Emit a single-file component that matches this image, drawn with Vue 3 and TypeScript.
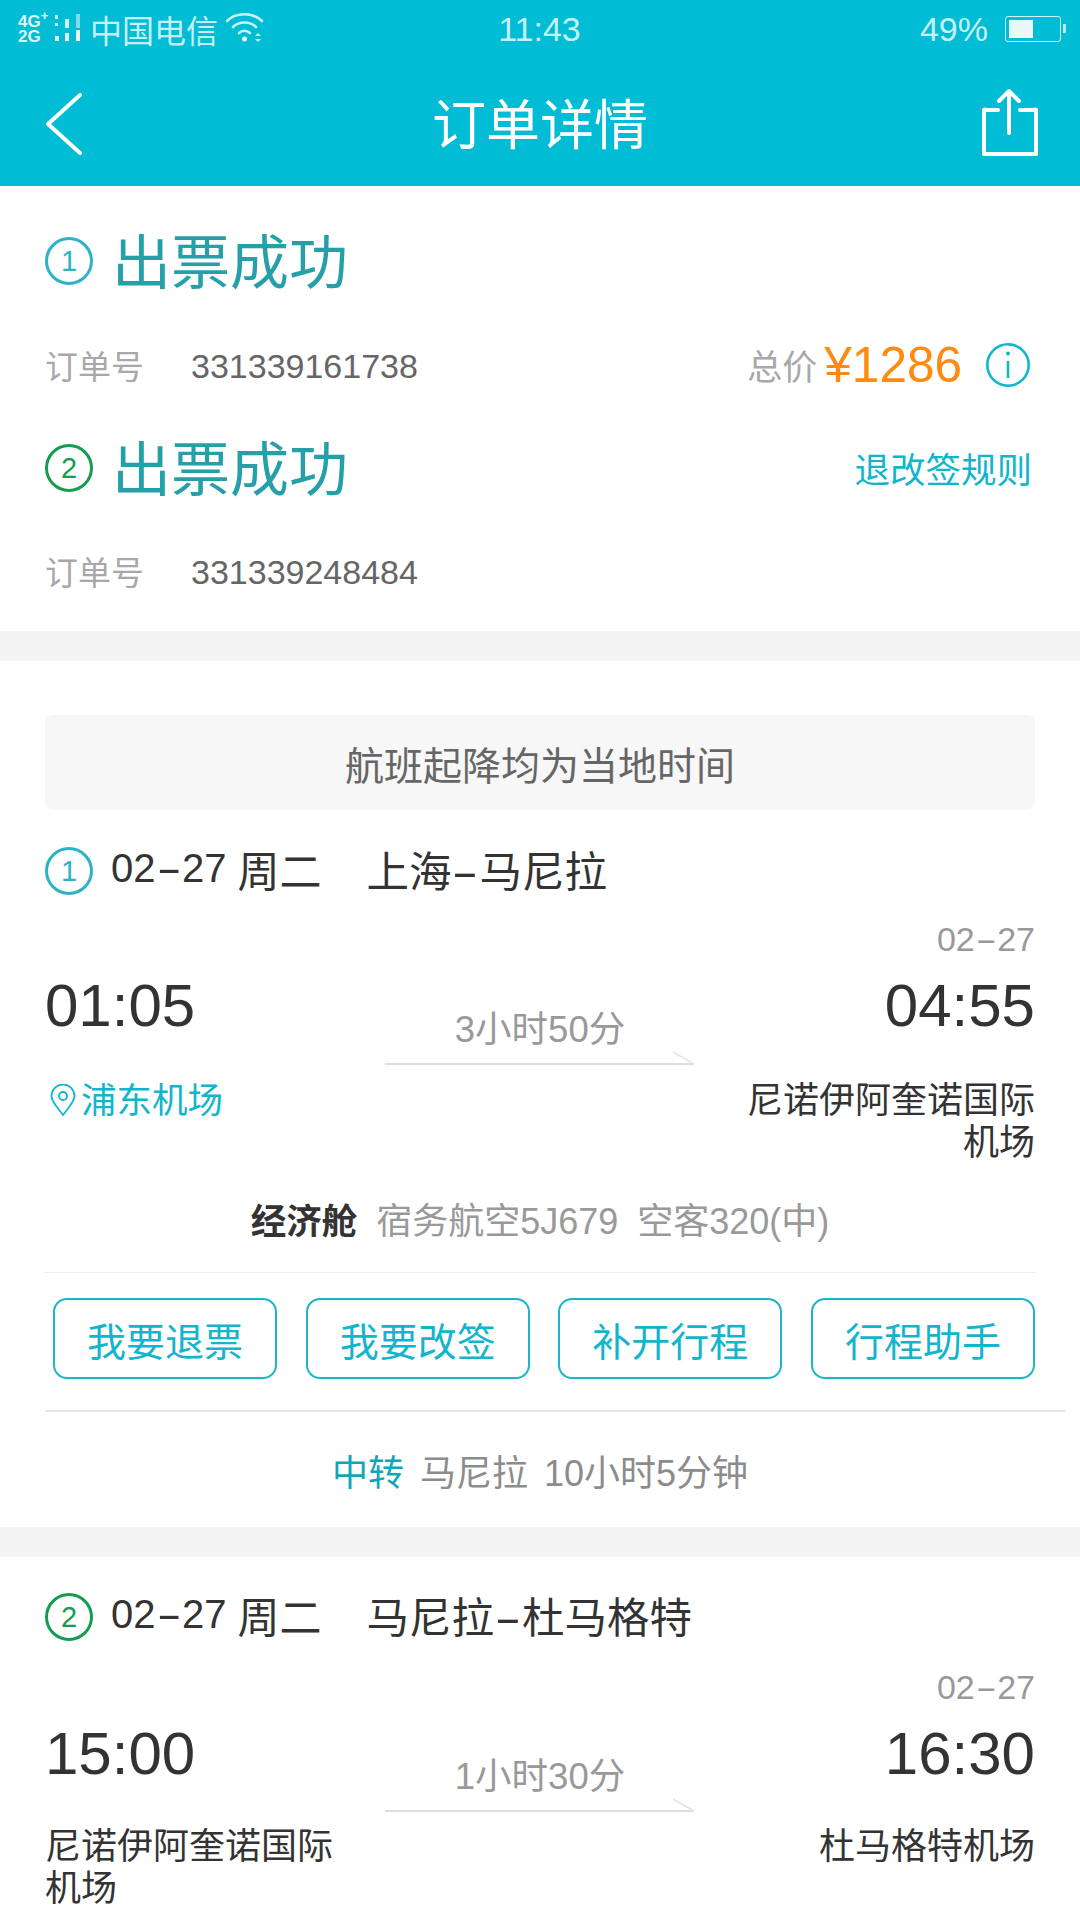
<template>
  <div class="page">
    <header class="top">
      <div class="status">
        <div class="status-left">
          <div class="net">
            <span>4G<sup>+</sup></span>
            <span>2G</span>
          </div>
          <svg class="signal" width="30" height="30" viewBox="0 0 30 30">
            <rect x="0" y="1" width="3" height="4" fill="#c9f3f7" />
            <rect x="0" y="9" width="3" height="3" fill="#c9f3f7" />
            <rect x="0" y="22" width="4" height="5" fill="#e6fafc" />
            <rect x="10" y="5" width="4" height="9" fill="#c9f3f7" />
            <rect x="10" y="19" width="4" height="8" fill="#e6fafc" />
            <rect x="21" y="0" width="4" height="14" fill="#7fdbe7" />
            <rect x="21" y="16" width="4" height="11" fill="#e6fafc" />
          </svg>
          <span class="carrier">中国电信</span>
          <svg class="wifi" width="38" height="30" viewBox="0 0 38 30" fill="none" stroke="#c9f3f7" stroke-width="2.6" stroke-linecap="round">
            <path d="M1 8C10-1 27-1 36 8" />
            <path d="M7 14C13 8 24 8 30 14" />
            <path d="M13 20C16 17 21 17 24 20" />
            <circle cx="18.500" cy="26" r="2.500" fill="#e6fafc" stroke="none" />
            <path d="M29 23l3-3 3 3zM29 26l3 3 3-3z" fill="#c9f3f7" stroke="none" />
          </svg>
        </div>
        <span class="clock">11:43</span>
        <div class="status-right">
          <span>49%</span>
          <div class="battery"><i class="battery-level" :style="{ width: '49%' }"></i></div>
        </div>
      </div>
      <nav class="nav">
        <svg width="36" height="62" viewBox="0 0 36 62" fill="none" stroke="#fff" stroke-width="4" stroke-linecap="round" stroke-linejoin="round">
          <path d="M34 2L2 31l32 29" />
        </svg>
        <h1>订单详情</h1>
        <svg class="share" width="56" height="68" viewBox="0 0 56 68" fill="none" stroke="#fff" stroke-width="4" stroke-linecap="round" stroke-linejoin="round">
          <path d="M16 22H4a1 1 0 0 0-2 2v41a1 1 0 0 0 2 1h48a1 1 0 0 0 2-2V24a1 1 0 0 0-2-2H38" />
          <path d="M27 45V3M17 13L27 3l10 10" />
        </svg>
      </nav>
    </header>

    <section class="summary">
      <div class="ticket">
        <span class="badge">1</span>
        <span class="ticket-state">出票成功</span>
      </div>
      <div class="order">
        <span class="order-label">订单号</span>
        <span class="order-no">331339161738</span>
        <div class="price">
          <span class="price-label">总价</span>
          <span class="price-value">¥1286</span>
          <svg width="46" height="46" viewBox="0 0 46 46" fill="none" stroke="#12b5cc" stroke-width="2.600">
            <circle cx="23" cy="23" r="20.700" />
            <path d="M23 19v17" />
            <circle cx="23" cy="11.500" r="2" fill="#12b5cc" stroke="none" />
          </svg>
        </div>
      </div>
      <div class="ticket ticket-second">
        <span class="badge badge-green">2</span>
        <span class="ticket-state">出票成功</span>
        <span class="rules">退改签规则</span>
      </div>
      <div class="order order-second">
        <span class="order-label">订单号</span>
        <span class="order-no">331339248484</span>
      </div>
    </section>

    <section v-for="(flight, i) in flights" :key="i" class="flight" :class="i === 0 ? 'flight-first' : 'flight-next'">
      <div v-if="i === 0" class="notice">航班起降均为当地时间</div>
      <div class="route">
        <span class="badge" :class="{ 'badge-green': i === 1 }">{{ i + 1 }}</span>
        <span class="route-date">02<span class="dash">-</span>27</span>
        <span class="route-day">周二</span>
        <span class="route-name">{{ flight.cityFrom }}<span class="dash">-</span>{{ flight.cityTo }}</span>
      </div>
      <div class="times">
        <span class="arrive-date">02<span class="dash">-</span>27</span>
        <span class="time time-from">{{ flight.from }}</span>
        <div class="duration">
          <span>{{ flight.duration }}</span>
          <svg width="310" height="14" viewBox="0 0 310 14" fill="none">
            <path d="M0 13h309" stroke="#dedede" stroke-width="2" />
            <path d="M288 1l21 12" stroke="#e4e4e4" stroke-width="1.500" />
          </svg>
        </div>
        <span class="time time-to">{{ flight.to }}</span>
        <div class="airport airport-from" :class="{ 'airport-link': flight.link }">
          <svg v-if="flight.link" width="26" height="32" viewBox="0 0 26 32" fill="none" stroke="#12b5cc" stroke-width="1.800">
            <path d="M13 31C8 24 1.500 18 1.500 12a11.500 11.500 0 0 1 23 0C24.500 18 18 24 13 31z" />
            <circle cx="13" cy="12" r="4" />
          </svg>
          <span>{{ flight.fromAirport }}</span>
        </div>
        <div class="airport airport-to">{{ flight.toAirport }}</div>
      </div>
      <template v-if="i === 0">
        <div class="cabin">
          <b>经济舱</b>
          <span>宿务航空5J679</span>
          <span>空客320(中)</span>
        </div>
        <div class="actions">
          <button v-for="action in actions" :key="action" type="button">{{ action }}</button>
        </div>
        <div class="transfer">
          <b>中转</b>
          <span>马尼拉</span>
          <span>10小时5分钟</span>
        </div>
      </template>
    </section>
  </div>
</template>

<script setup lang="ts">
const actions = ["我要退票", "我要改签", "补开行程", "行程助手"];

const flights = [
  {
    cityFrom: "上海",
    cityTo: "马尼拉",
    from: "01:05",
    to: "04:55",
    duration: "3小时50分",
    fromAirport: "浦东机场",
    toAirport: "尼诺伊阿奎诺国际机场",
    link: true,
  },
  {
    cityFrom: "马尼拉",
    cityTo: "杜马格特",
    from: "15:00",
    to: "16:30",
    duration: "1小时30分",
    fromAirport: "尼诺伊阿奎诺国际机场",
    toAirport: "杜马格特机场",
    link: false,
  },
];
</script>

<style>
html,
body {
  background: #fff;
}
</style>

<style scoped>
.page {
  width: 1080px;
  height: 1920px;
  overflow: hidden;
  background: #f4f4f4;
  font-family: "Liberation Sans", "Noto Sans CJK SC", sans-serif;
  color: #333;
}

.top {
  height: 186px;
  background: #00bcd4;
  color: #fff;
}

.status {
  height: 58px;
  padding: 0 19px 0 18px;
  display: grid;
  grid-template-columns: 1fr auto 1fr;
  align-items: center;
  font-size: 34px;
  color: #c4f1f6;
}

.status-left {
  display: flex;
  align-items: center;
  font-size: 32px;
}

.net {
  width: 37px;
  display: flex;
  flex-direction: column;
  font-size: 17px;
  line-height: 15px;
  font-weight: 700;
  color: #dff7fa;
  white-space: nowrap;
}

.net sup {
  font-size: 13px;
  line-height: 0;
}

.signal {
  margin-right: 5px;
}

.carrier {
  width: 136px;
}

.wifi {
  margin-top: -2px;
}

.status-right {
  display: flex;
  justify-content: flex-end;
  align-items: center;
  gap: 17px;
}

.battery {
  position: relative;
  width: 56px;
  height: 26px;
  padding: 3px;
  border: 1.500px solid #d6f5f8;
  border-radius: 3px;
  box-sizing: border-box;
}

.battery::after {
  content: "";
  position: absolute;
  right: -6px;
  top: 7px;
  width: 3px;
  height: 9px;
  background: #b5ecf3;
}

.battery-level {
  display: block;
  height: 100%;
  background: #e9f9fb;
}

.nav {
  height: 128px;
  padding: 3px 42px 0 46px;
  box-sizing: border-box;
  display: grid;
  grid-template-columns: 1fr auto 1fr;
  align-items: center;
}

.nav h1 {
  margin: 0 4px 4px 0;
  font-size: 54px;
  font-weight: 400;
}

.share {
  justify-self: end;
  margin-bottom: 3px;
}

.summary {
  height: 445px;
  margin-bottom: 30px;
  padding: 45px 48px 0 45px;
  box-sizing: border-box;
  background: #fff;
}

.ticket {
  height: 60px;
  display: flex;
  align-items: center;
}

.ticket-second {
  margin-top: 47px;
}

.badge {
  width: 48px;
  height: 48px;
  flex: none;
  border: 3px solid #2eb2c8;
  border-radius: 50%;
  box-sizing: border-box;
  display: flex;
  align-items: center;
  justify-content: center;
  font-size: 29px;
  color: #2eb2c8;
}

.badge-green {
  border-color: #169c50;
  color: #169c50;
}

.ticket-state {
  margin: 5px 0 0 19px;
  font-size: 59px;
  line-height: 60px;
  color: #26a0a8;
}

.rules {
  margin: 0 0 2px auto;
  font-size: 35.500px;
  color: #12b5cc;
}

.order {
  height: 50px;
  margin-top: 50px;
  display: flex;
  align-items: center;
}

.order-second {
  margin-top: 49px;
}

.order-label {
  width: 146px;
  margin-bottom: 3px;
  font-size: 33px;
  color: #a8a8a8;
}

.order-no {
  font-size: 34px;
  color: #666;
}

.price {
  margin-left: auto;
  margin-right: 1px;
  margin-bottom: 3px;
  display: flex;
  align-items: center;
}

.price-label {
  margin-right: 7px;
  font-size: 35px;
  color: #a8a8a8;
}

.price-value {
  margin-right: 23px;
  font-size: 49.500px;
  color: #ff8a10;
}

.flight {
  height: 866px;
  margin-bottom: 30px;
  padding: 30px 45px 0;
  box-sizing: border-box;
  background: #fff;
}

.flight-first {
  padding-top: 54px;
}

.notice {
  height: 95px;
  margin-bottom: 31px;
  border-radius: 8px;
  background: #f7f7f7;
  display: flex;
  align-items: center;
  justify-content: center;
  font-size: 39px;
  color: #666;
}

.route {
  height: 60px;
  display: flex;
  align-items: center;
  font-size: 40px;
}

.route > span:not(.badge) {
  margin-bottom: 6px;
}

.route > .route-date {
  margin-left: 18px;
  margin-bottom: 0;
}

.route-day {
  margin-left: 11px;
  font-size: 42px;
}

.route-name {
  margin-left: 45px;
  font-size: 42.500px;
}

.dash {
  display: inline-block;
  width: 0.66em;
  text-align: center;
  transform: scaleX(1.9);
}

.times {
  margin-top: 18px;
  display: grid;
  grid-template-columns: 1fr 310px 1fr;
  grid-template-rows: 40px 70px auto;
  row-gap: 12px;
}

.flight-next .times {
  margin-top: 20px;
}

.arrive-date {
  grid-column: 3;
  grid-row: 1;
  text-align: right;
  font-size: 34px;
  line-height: 40px;
  color: #999;
}

.time {
  grid-row: 2;
  font-size: 60px;
  line-height: 70px;
}

.time-from {
  grid-column: 1;
}

.time-to {
  grid-column: 3;
  text-align: right;
}

.duration {
  grid-column: 2;
  grid-row: 2 / 4;
  padding-top: 39px;
  display: flex;
  flex-direction: column;
  align-items: center;
  font-size: 36.500px;
  line-height: 40px;
  color: #999;
}

.flight-next .duration {
  padding-top: 38px;
}

.duration svg {
  margin-top: 1px;
}

.airport {
  grid-row: 3;
  margin-top: 27px;
  font-size: 36px;
  line-height: 42px;
}

.flight-next .airport {
  margin-top: 25px;
}

.airport-from {
  grid-column: 1;
  display: flex;
  align-items: flex-start;
  max-width: 295px;
}

.airport-link {
  color: #12b5cc;
  font-size: 35.500px;
}

.airport-link svg {
  margin: 4px 5px 0 5px;
}

.airport-to {
  grid-column: 3;
  justify-self: end;
  max-width: 295px;
  text-align: right;
}

.cabin {
  height: 50px;
  margin-top: 29px;
  display: flex;
  justify-content: center;
  align-items: center;
  gap: 19px;
  font-size: 36px;
  color: #999;
}

.cabin b {
  font-size: 35.500px;
  color: #333;
}

.actions {
  margin-top: 29px;
  padding: 25px 0 31px 8px;
  border-top: 1px solid #eee;
  display: grid;
  grid-template-columns: repeat(4, 224px);
  justify-content: space-between;
}

.actions button {
  height: 81px;
  padding: 0;
  border: 2px solid #1cb5c9;
  border-radius: 14px;
  background: #fff;
  font-family: inherit;
  font-size: 39px;
  color: #12b5cc;
}

.transfer {
  width: 1020px;
  height: 115px;
  padding: 2px 30px 0 0;
  border-top: 2px solid #e5e5e5;
  box-sizing: border-box;
  display: flex;
  align-items: center;
  justify-content: center;
  gap: 16px;
  font-size: 36px;
  color: #8c8c8c;
}

.transfer b {
  font-weight: 400;
  color: #12a5b8;
}
</style>
